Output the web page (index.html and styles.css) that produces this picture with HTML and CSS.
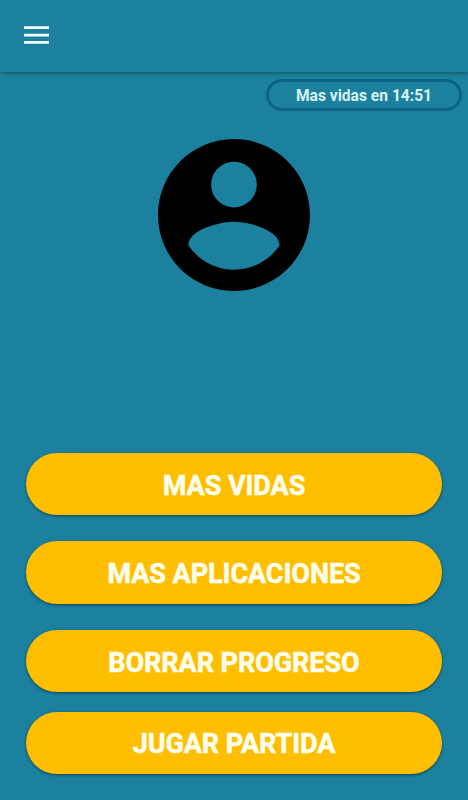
FILE: index.html
```html
<!DOCTYPE html>
<html lang="es">
<head>
<meta charset="utf-8">
<title>Inicio</title>
<link rel="stylesheet" href="styles.css">
</head>
<body>
<header class="toolbar">
  <svg class="menu-icon" viewBox="0 0 25 18"><path d="M0 .300h25V3H0zM0 7.700h25v2.700H0zM0 15h25v2.700H0z"/></svg>
</header>
<main class="content">
  <div class="timer">Mas vidas en 14:51</div>
  <svg class="avatar" viewBox="2 2 20 20"><path d="M12 2C6.480 2 2 6.480 2 12s4.480 10 10 10 10-4.480 10-10S17.520 2 12 2zm0 3c1.660 0 3 1.340 3 3s-1.340 3-3 3-3-1.340-3-3 1.340-3 3-3zm0 14.200c-2.500 0-4.710-1.280-6-3.220.030-1.990 4-3.080 6-3.080 1.990 0 5.970 1.090 6 3.080-1.290 1.940-3.500 3.220-6 3.220z"/></svg>
  <nav class="actions">
    <button class="action">MAS VIDAS</button>
    <button class="action">MAS APLICACIONES</button>
    <button class="action">BORRAR PROGRESO</button>
    <button class="action action-play">JUGAR PARTIDA</button>
  </nav>
</main>
</body>
</html>
```
FILE: styles.css
```css
* { box-sizing: border-box; }
body {
  margin: 0;
  height: 800px;
  overflow: hidden;
  display: flex;
  flex-direction: column;
  background: #1c819f;
  font-family: Roboto, sans-serif;
}
.toolbar {
  height: 72px;
  flex: none;
  padding: 26px 24px;
  box-shadow: 0 1px 4px rgba(0, 0, 0, .4);
}
.menu-icon { display: block; width: 25px; height: 18px; fill: #f4ffff; }
.content {
  flex: 1;
  display: flex;
  flex-direction: column;
  align-items: center;
  padding: 7px 6px 26px;
}
.timer {
  align-self: flex-end;
  width: 196px;
  height: 32px;
  border: 3px solid #0b6282;
  border-radius: 16px;
  color: #d8f3f0;
  font-size: 15.6px;
  font-weight: 700;
  line-height: 28px;
  text-align: center;
}
.avatar { width: 152px; height: 152px; margin-top: 28px; }
.actions {
  width: 416px;
  margin-top: auto;
  display: flex;
  flex-direction: column;
  gap: 26px;
}
.action {
  height: 62.4px;
  padding: 3px 0 0;
  border: 0;
  border-radius: 31.2px;
  background: #ffbf00;
  color: #fffff0;
  font: 700 27px Roboto, sans-serif;
  letter-spacing: -.05px;
  -webkit-text-stroke: .5px #fffff0;
  box-shadow: 0 1px 3px rgba(0, 0, 0, .5);
}
.action-play { margin-top: -6.600px; }
```
